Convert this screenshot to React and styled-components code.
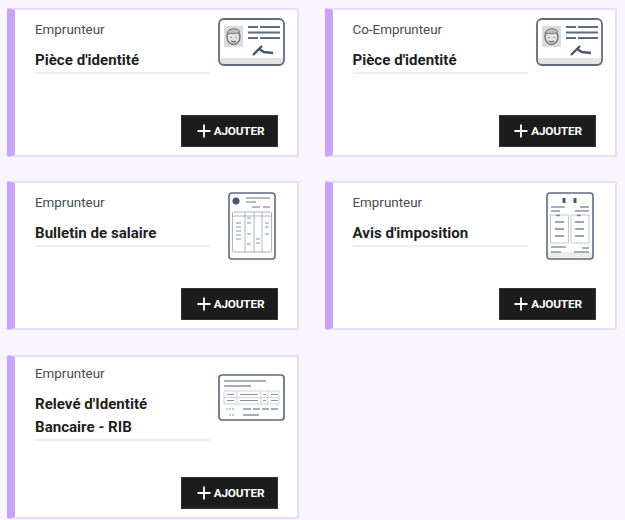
import styled, { createGlobalStyle } from 'styled-components';

const GlobalStyle = createGlobalStyle`
  html, body {
    margin: 0;
    padding: 0;
    background: #f8f5ff;
    font-family: Roboto, "Liberation Sans", sans-serif;
  }
`;

const Grid = styled.div`
  display: grid;
  grid-template-columns: 292px 292px;
  column-gap: 25.5px;
  row-gap: 24.4px;
  align-items: start;
  padding: 8px 0 0 7px;
`;

const Card = styled.div`
  box-sizing: border-box;
  min-height: 149px;
  display: flex;
  flex-direction: column;
  background: #fff;
  border: 2px solid #e9dcfd;
  border-left: 8px solid #c8a2fb;
  border-radius: 2px;
  padding: ${(p) => p.$top}px 19px 8px 20px;
`;

const Top = styled.div`
  display: flex;
  align-items: flex-start;
`;

const Info = styled.div`
  width: 175px;
  flex: none;
  border-bottom: 2px solid #eeeeee;
`;

const Kind = styled.div`
  font-size: 13.4px;
  line-height: 20px;
  color: #4a4a4a;
  margin-bottom: 9px;
`;

const Title = styled.div`
  font-size: 15.1px;
  font-weight: 700;
  line-height: 23px;
  color: #1f1f1f;
`;

const Art = styled.svg`
  flex: none;
  margin-left: ${(p) => p.$left}px;
  margin-top: ${(p) => p.$top}px;
  margin-bottom: -40px;
`;

const AddButton = styled.button`
  align-self: flex-end;
  margin-top: auto;
  width: 97px;
  height: 32px;
  display: flex;
  align-items: center;
  justify-content: center;
  gap: 3px;
  padding: 0 0 0 2px;
  background: #1c1c1c;
  border: 1px solid #333;
  color: #fff;
  font-family: Roboto, "Liberation Sans", sans-serif;
  font-size: 11.8px;
  font-weight: 700;
  letter-spacing: -0.2px;
`;

const Spacer = styled.div`
  height: 36px;
  flex: none;
`;

const stroke = '#5f6b7e';

const IdArt = () => (
  <Art $left={8} $top={-2} width="67" height="48" viewBox="0 0 67 48" fill="none">
    <path d="M2 40h63v3a3 3 0 0 1-3 3H5a3 3 0 0 1-3-3z" fill="#e4e4e4" />
    <rect x="1" y="1" width="65" height="46" rx="5" stroke={stroke} strokeWidth="1.8" />
    <rect x="6" y="8" width="19" height="21" fill="#dcdcdc" />
    <ellipse cx="15.5" cy="19" rx="6.5" ry="7.5" fill="#e2e2e2" stroke="#777" strokeWidth="1.5" />
    <path d="M9 15c1-5 11-6 13-1-3 2-9 2-13 1z" fill="#bcbcbc" stroke="#777" />
    <path d="M12.5 19.5h1M17.5 19.5h1M13 23c1.500 1 3.500 1 5 0" stroke="#666" strokeWidth="1.2" />
    <path d="M30 9h10M42 9h20M30 14.5h32M30 20h10M42 20h20" stroke={stroke} strokeWidth="2.2" />
    <path d="M35 37l9-9M41 31l5 3 9 1" stroke="#47566e" strokeWidth="2.4" />
  </Art>
);

const PayArt = () => (
  <Art $left={18} $top={-1} width="48" height="68" viewBox="0 0 48 68" fill="none">
    <rect x="1" y="1" width="46" height="66" rx="3" stroke={stroke} strokeWidth="1.6" />
    <circle cx="8" cy="9" r="3.5" fill="#47566e" />
    <path d="M18 6h24M18 10h10M24 15h8M35 15h7" stroke="#9aa3b0" strokeWidth="1.3" />
    <rect x="4.5" y="20" width="39" height="40" rx="1" stroke="#9aa3b0" strokeWidth=".8" />
    <path d="M4.5 24h39M17 20v40M26 20v40M34 20v40" stroke="#9aa3b0" strokeWidth=".8" />
    <path d="M8 31h5M8 35h5M8 39h5M8 43h5M8 47h5M19 26h4M19 31h4M19 42h4M19 52h4M28 47h4M28 51h4M37 31h4M37 35h4M37 42h4" stroke="#8a94a3" strokeWidth="1.1" />
  </Art>
);

const TaxArt = () => (
  <Art $left={18} $top={-1} width="48" height="68" viewBox="0 0 48 68" fill="none">
    <path d="M2 60h44v5a2 2 0 0 1-2 2H4a2 2 0 0 1-2-2z" fill="#ececec" />
    <rect x="1" y="1" width="46" height="66" rx="3" stroke={stroke} strokeWidth="1.6" />
    <path d="M18 6v5M29 6v5" stroke="#47566e" strokeWidth="3" />
    <path d="M5 15h14M5 19h9M34 15h9M29 19h14" stroke="#8a94a3" strokeWidth="1.3" />
    <rect x="4.5" y="23" width="18" height="28" stroke="#b3bac4" strokeWidth=".8" />
    <rect x="25" y="23" width="18" height="28" stroke="#b3bac4" strokeWidth=".8" />
    <path d="M9 30h9M9 37h9M9 44h9M29 30h9M29 37h9M29 44h9M10 23.5h4M31 23.5h4" stroke="#7b8596" strokeWidth="1.3" />
    <path d="M5 55h15M5 60h10M36 56h7M28 60h15" stroke="#8a94a3" strokeWidth="1.3" />
  </Art>
);

const RibArt = () => (
  <Art $left={8} $top={10} width="67" height="47" viewBox="0 0 67 47" fill="none">
    <rect x="1" y="1" width="65" height="45" rx="3" stroke={stroke} strokeWidth="1.7" />
    <path d="M6 7h42M6 12h27" stroke="#8a94a3" strokeWidth="1.5" />
    <rect x="6" y="17" width="55" height="13" stroke="#c3c8d0" strokeWidth=".8" />
    <path d="M6 23.5h55M19 17v13M43 17v13M50 17v13" stroke="#c3c8d0" strokeWidth=".8" />
    <path d="M9 20.5h7M22 20.5h18M45 20.5h3M53 20.5h7M9 26.5h7M22 26.5h18M45 26.5h3M53 26.5h7" stroke="#8a94a3" strokeWidth="1.1" />
    <path d="M8 35h9M11 41h6" stroke="#b0b6c0" strokeWidth="1.4" strokeDasharray="2 1" />
    <path d="M25 35h8M35 35h7M44 35h7M53 35h7M25 41h16" stroke="#8a94a3" strokeWidth="1.3" />
  </Art>
);

const PlusIcon = () => (
  <svg width="14" height="14" viewBox="0 0 14 14" fill="none">
    <path d="M7 .5v13M.5 7h13" stroke="#fff" strokeWidth="1.8" />
  </svg>
);

const items = [
  { kind: 'Emprunteur', title: ["Pièce d'identité"], art: IdArt, top: 10 },
  { kind: 'Co-Emprunteur', title: ["Pièce d'identité"], art: IdArt, top: 10 },
  { kind: 'Emprunteur', title: ['Bulletin de salaire'], art: PayArt, top: 10 },
  { kind: 'Emprunteur', title: ["Avis d'imposition"], art: TaxArt, top: 10 },
  { kind: 'Emprunteur', title: ["Relevé d'Identité", 'Bancaire - RIB'], art: RibArt, top: 7 },
];

export default function App() {
  return (
    <>
      <GlobalStyle />
      <Grid>
        {items.map((item, i) => {
          const ItemArt = item.art;
          return (
            <Card key={i} $top={item.top}>
              <Top>
                <Info>
                  <Kind>{item.kind}</Kind>
                  {item.title.map((line) => (
                    <Title key={line}>{line}</Title>
                  ))}
                </Info>
                <ItemArt />
              </Top>
              <Spacer />
              <AddButton type="button">
                <PlusIcon />
                AJOUTER
              </AddButton>
            </Card>
          );
        })}
      </Grid>
    </>
  );
}
